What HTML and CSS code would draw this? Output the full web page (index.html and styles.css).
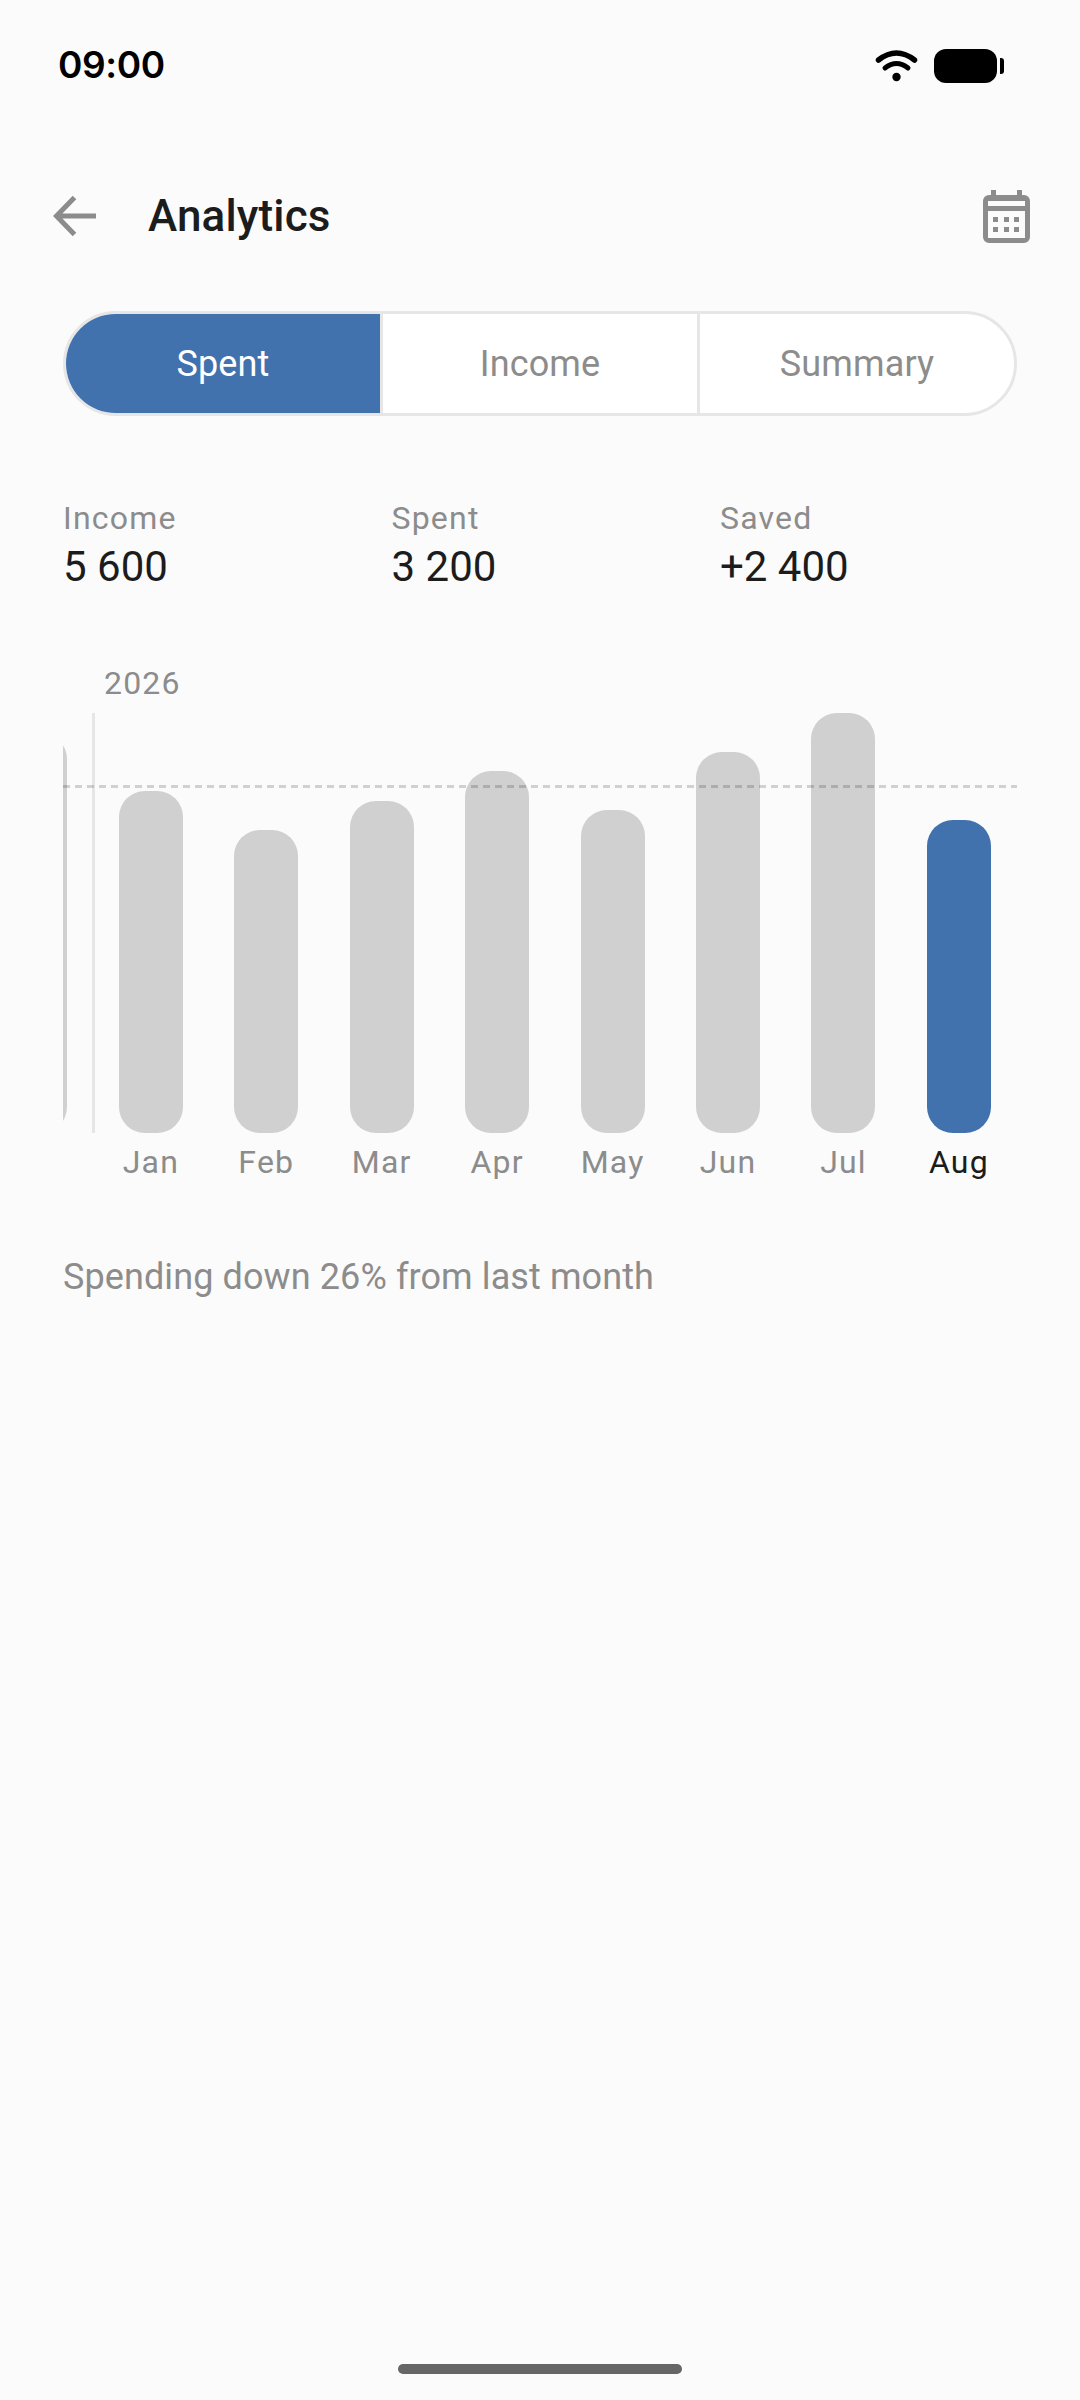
FILE: index.html
```html
<!DOCTYPE html>
<html lang="en">
<head>
  <meta charset="UTF-8">
  <title>Analytics</title>
  <link rel="stylesheet" href="styles.css">
</head>
<body>
  <div class="status-bar">
    <span class="time">09:00</span>
    <div class="status-icons">
      <svg class="wifi" width="44" height="34" viewBox="0 0 44 34">
        <path d="M3.5 11 Q21.5 -3 39.5 11" fill="none" stroke="#000" stroke-width="5.5" stroke-linecap="round"/>
        <path d="M10 19 Q21.5 10 33 19" fill="none" stroke="#000" stroke-width="5" stroke-linecap="round"/>
        <circle cx="21.5" cy="28" r="4.2" fill="#000"/>
      </svg>
      <div class="battery"></div>
      <div class="battery-tip"></div>
    </div>
  </div>

  <div class="header">
    <svg class="back" width="44" height="44" viewBox="0 0 44 44">
      <path d="M43 22 H6 M21.5 3.5 L3.5 22 L21.5 40.5" fill="none" stroke="#8c8c8c" stroke-width="5"/>
    </svg>
    <h1>Analytics</h1>
    <svg class="calendar" width="47" height="53" viewBox="0 0 47 53">
      <path fill="#8c8c8c" fill-rule="evenodd" d="M8 0h5v5h21V0h5v5h2a6 6 0 0 1 6 6v36a6 6 0 0 1-6 6H6a6 6 0 0 1-6-6V11a6 6 0 0 1 6-6h2zM5 11v5h37v-5zM5 21v27h37V21z"/>
      <path fill="#8c8c8c" d="M10 27h5v5h-5zM21 27h5v5h-5zM31 27h5v5h-5zM10 37h5v5h-5zM21 37h5v5h-5zM31 37h5v5h-5z"/>
    </svg>
  </div>

  <div class="content">
    <div class="tabs">
      <div class="tab active">Spent</div>
      <div class="tab">Income</div>
      <div class="tab">Summary</div>
    </div>

    <div class="stats">
      <div class="stat">
        <div class="stat-label">Income</div>
        <div class="stat-value">5 600</div>
      </div>
      <div class="stat">
        <div class="stat-label">Spent</div>
        <div class="stat-value">3 200</div>
      </div>
      <div class="stat">
        <div class="stat-label">Saved</div>
        <div class="stat-value">+2 400</div>
      </div>
    </div>

    <div class="chart">
      <div class="year">2026</div>
      <div class="months">
        <div class="month">
          <div class="slot"><div class="bar" style="height: 400px"></div></div>
          <div class="month-label"></div>
        </div>
        <div class="month">
          <div class="slot year-start"><div class="bar" style="height: 342px"></div></div>
          <div class="month-label">Jan</div>
        </div>
        <div class="month">
          <div class="slot"><div class="bar" style="height: 303px"></div></div>
          <div class="month-label">Feb</div>
        </div>
        <div class="month">
          <div class="slot"><div class="bar" style="height: 332px"></div></div>
          <div class="month-label">Mar</div>
        </div>
        <div class="month">
          <div class="slot"><div class="bar" style="height: 362px"></div></div>
          <div class="month-label">Apr</div>
        </div>
        <div class="month">
          <div class="slot"><div class="bar" style="height: 323px"></div></div>
          <div class="month-label">May</div>
        </div>
        <div class="month">
          <div class="slot"><div class="bar" style="height: 381px"></div></div>
          <div class="month-label">Jun</div>
        </div>
        <div class="month">
          <div class="slot"><div class="bar" style="height: 420px"></div></div>
          <div class="month-label">Jul</div>
        </div>
        <div class="month current">
          <div class="slot"><div class="bar" style="height: 313px"></div></div>
          <div class="month-label">Aug</div>
        </div>
      </div>
      <div class="average"></div>
    </div>

    <p class="note">Spending down 26% from last month</p>
  </div>

  <div class="home-indicator"></div>
</body>
</html>
```

FILE: styles.css
```css
* {
  box-sizing: border-box;
}

html, body {
  margin: 0;
  height: 2400px;
}

body {
  display: flex;
  flex-direction: column;
  overflow: hidden;
  background-color: #fbfbfb;
  color: #1c1c1c;
  font-family: Roboto, "Liberation Sans", sans-serif;
}

.status-bar {
  display: flex;
  justify-content: space-between;
  align-items: center;
  height: 128px;
  padding: 0 76px 0 58px;
}

.time {
  margin-top: 1px;
  color: #000;
  font-family: Inter, Roboto, sans-serif;
  font-size: 37px;
  font-weight: 600;
  letter-spacing: -0.4px;
}

.status-icons {
  display: flex;
  align-items: center;
  margin-top: 4px;
}

.wifi {
  margin-right: 15px;
}

.battery {
  width: 63px;
  height: 34px;
  border-radius: 12px;
  background-color: #000;
}

.battery-tip {
  width: 4px;
  height: 16px;
  margin-left: 3px;
  border-radius: 0 3px 3px 0;
  background-color: #000;
}

.header {
  display: flex;
  align-items: center;
  height: 176px;
  padding: 0 50px 0 53px;
}

.header h1 {
  flex: 1;
  margin: 0 0 0 51px;
  font-size: 44px;
  font-weight: 500;
  letter-spacing: 0.15px;
}

.content {
  padding: 7px 63px 0;
}

.tabs {
  display: flex;
  height: 105px;
  border: 3px solid #e6e6e6;
  border-radius: 53px;
  background-color: #fff;
  overflow: hidden;
}

.tab {
  display: flex;
  flex: 1;
  justify-content: center;
  align-items: center;
  color: #8c8c8c;
  font-size: 36px;
  letter-spacing: 0.15px;
}

.tab + .tab {
  border-left: 3px solid #e6e6e6;
}

.tab.active {
  background-color: #4172ae;
  color: #fff;
}

.stats {
  display: grid;
  grid-template-columns: repeat(3, 328.5px);
  margin-top: 82px;
}

.stat-label {
  color: #8c8c8c;
  font-size: 32px;
  line-height: 40px;
  letter-spacing: 1.2px;
}

.stat-value {
  margin-top: 5px;
  font-size: 42px;
  line-height: 48px;
}

.chart {
  position: relative;
  margin-top: 72px;
  overflow: hidden;
}

.year {
  height: 50px;
  padding-top: 2px;
  padding-left: 41px;
  color: #8c8c8c;
  font-size: 32px;
  line-height: 36px;
  letter-spacing: 1.2px;
}

.months {
  display: grid;
  grid-template-columns: repeat(9, 115.45px);
  margin-left: -85.3px;
}

.slot {
  display: flex;
  justify-content: center;
  align-items: flex-end;
  height: 420px;
}

.year-start {
  position: relative;
}

.year-start::before {
  content: "";
  position: absolute;
  top: 0;
  bottom: 0;
  left: -1px;
  width: 3px;
  background-color: #e6e6e6;
}

.bar {
  width: 64px;
  border-radius: 26px;
  background-color: #d0d0d0;
}

.month-label {
  height: 48px;
  padding-top: 9px;
  color: #8c8c8c;
  font-size: 32px;
  line-height: 40px;
  letter-spacing: 1.2px;
  text-align: center;
}

.current .bar {
  background-color: #4172ae;
}

.current .month-label {
  color: #1c1c1c;
}

.average {
  position: absolute;
  top: 122px;
  left: 0;
  right: 0;
  height: 3px;
  background: repeating-linear-gradient(90deg, rgba(0, 0, 0, 0.17) 0 7px, transparent 7px 12px);
}

.note {
  margin: 74px 0 0;
  color: #8c8c8c;
  font-size: 36px;
  line-height: 44px;
  letter-spacing: 0.1px;
}

.home-indicator {
  width: 284px;
  height: 10px;
  margin: auto auto 26px;
  border-radius: 5px;
  background-color: #666;
}
```
